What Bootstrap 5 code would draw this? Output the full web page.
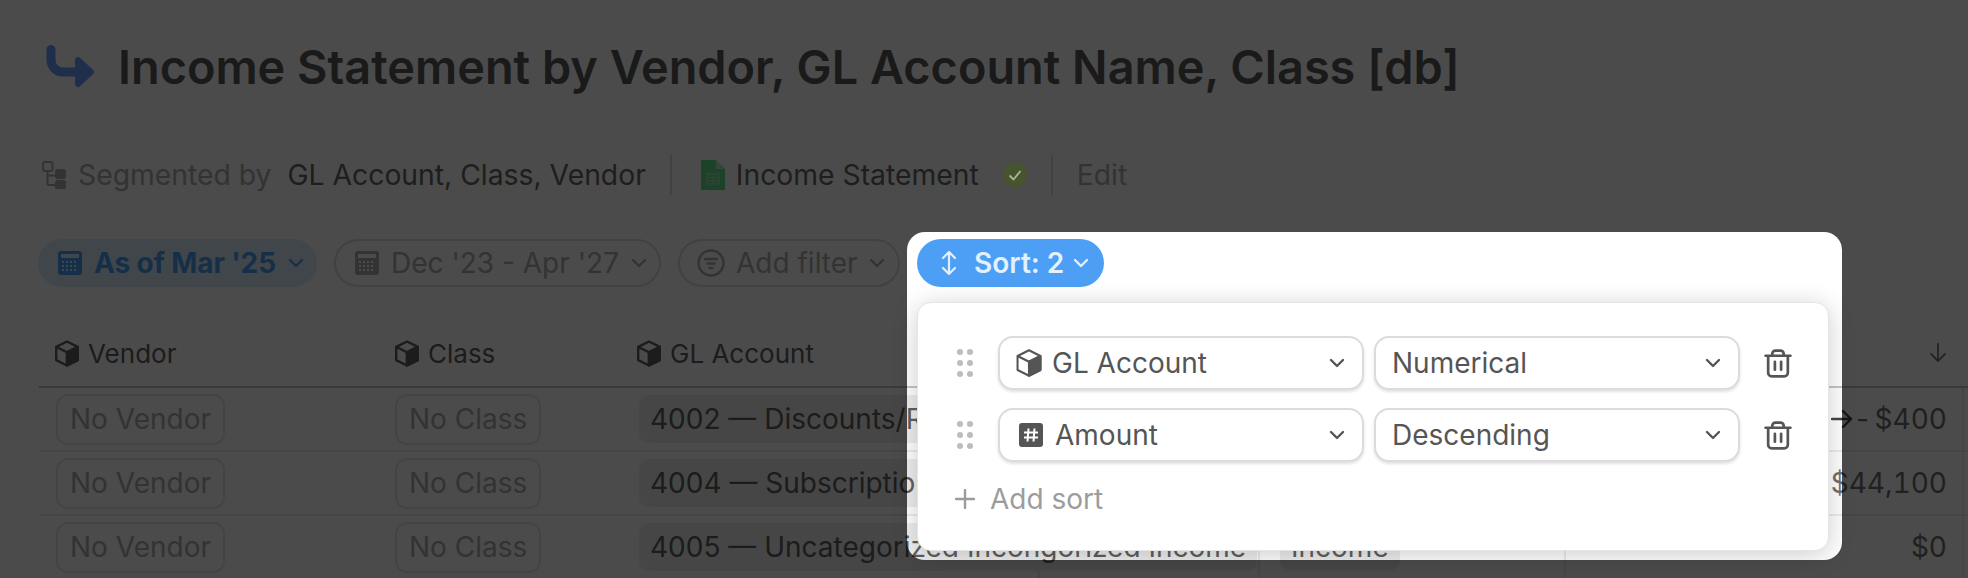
<!DOCTYPE html>
<html lang="en">
<head>
    <meta charset="UTF-8">
    <title>Income Statement by Vendor, GL Account Name, Class [db]</title>
    <link href="https://cdn.jsdelivr.net/npm/bootstrap@5.3.0/dist/css/bootstrap.min.css" rel="stylesheet">
    <style>
    html, body { height: 578px; overflow: hidden; }
    body { font-family: Inter, "Liberation Sans", sans-serif; background: #fff; color: #5a5a5a; font-size: 28px; position: relative; }
    svg { flex: none; display: block; }

    .title-row { padding: 40px 0 0 46px; height: 150px; gap: 24px; }
    .title-row h1 { font-size: 46.850px; font-weight: 600; line-height: 55px; margin: 0; color: #585858; white-space: nowrap; }
    .title-row svg { margin-top: 5px; }

    .meta-row { height: 50px; padding-left: 42px; font-size: 28.300px; white-space: nowrap; }
    .meta-muted { color: #adadad; }
    .meta-dark { color: #666; }
    .meta-sep { width: 2px; height: 40px; background: #dedede; }
    .seg-ic { margin-right: 12px; }
    .seg-val { margin-left: 16px; }
    .sheet-ic { margin-left: 29px; margin-right: 11px; }
    .ok-ic { position: relative; z-index: 11; }

    .pill-row { padding: 39px 0 0 38px; gap: 17px; }
    .fpill { height: 48px; border-radius: 24px; border: 2px solid #dcdcdc; color: #adadad; white-space: nowrap; flex: none; }
    .fpill-on { width: 279px; padding-left: 20px; gap: 12px; background: #dbeefd; border: 0; color: #4c9ff5; font-weight: 700; letter-spacing: -.1px; }
    .fpill-date { width: 327px; padding-left: 19px; gap: 12px; }
    .fpill-add { width: 222px; padding-left: 17px; gap: 11px; }
    .fpill-sort { width: 187px; padding-left: 24px; gap: 9px; background: #4c9ff5; border: 0; color: #e3f0fe; font-weight: 600; }
    .fpill-sort .ud { margin-right: 8px; }

    .data-tbl { table-layout: fixed; width: 1929px; margin: 33px 0 0 39px; --bs-table-bg: transparent; --bs-table-color: #6f6f6f; }
    .data-tbl th, .data-tbl td { padding: 0 0 0 17px; vertical-align: middle; white-space: nowrap; border-bottom: 2px solid #ebebeb; }
    .data-tbl th { height: 67px; padding-left: 16px; font-size: 26px; font-weight: 400; border-bottom-color: #c5c5c5; color: #5f5f5f; }
    .data-tbl th:nth-child(2) { padding-left: 17px; }
    .data-tbl th:nth-child(3) { padding-left: 18px; }
    .data-tbl td { height: 64px; }
    .data-tbl td.line-r { border-right: 2px solid #ebebeb; }
    .data-tbl .cw1 { width: 339px; }
    .data-tbl .cw2 { width: 241px; }
    .data-tbl .cw3 { width: 420px; }
    .data-tbl .cw4 { width: 220px; }
    .data-tbl .cw5 { width: 306px; }
    .data-tbl .cw6 { width: 403px; }
    .data-tbl th.amt, .data-tbl td.amt { padding: 0 21px 0 0; text-align: right; font-variant-numeric: tabular-nums; font-feature-settings: "tnum"; }
    .data-tbl td.amt { box-shadow: inset -4px 0 0 #fff, inset -6px 0 0 #ebebeb; }
    .neg-sign { margin-right: 3px; }
    .chip-none { height: 51px; line-height: 47px; padding: 0 12px; border: 2px solid #e6e6e6; border-radius: 12px; color: #adadad; }
    .chip-fill { height: 48px; line-height: 48px; padding: 0 11px; margin-left: 3px; border-radius: 10px; background: #eeeeee; color: #5f5f5f; }
    .hd-cell { gap: 9px; }

    .spot { left: 907px; top: 232px; width: 935px; height: 328px; border-radius: 18px; box-shadow: 0 0 0 2200px rgba(0, 0, 0, .705); z-index: 10; }
    .sort-panel { margin: 70px 0 0 10px; width: 912px; height: 249px; border: 1px solid #e6e6e6; border-radius: 14px; box-shadow: 0 4px 26px rgba(0, 0, 0, .2); padding: 33px 0 0 39px; color: #555; }
    .sort-line { gap: 10px; margin-bottom: 18px; height: 54px; }
    .sort-line .drag { margin-right: 15px; }
    .sort-line .bin { margin-left: 14px; }
    .pick { width: 366px; height: 54px; border: 2px solid #dcdcdc; border-radius: 15px; box-shadow: 0 2px 3px rgba(0, 0, 0, .12); padding: 0 17px 0 16px; gap: 10px; background: #fff; }
    .pick .chev { margin-left: auto; }
    .hash-ic { margin: 0 2px 0 3px; }
    .add-sort { color: #9c9c9c; gap: 15px; margin: -2px 0 0 -2px; }
    </style>
</head>
<body>
    <div class="d-flex title-row">
        <svg width="48" height="44" viewBox="0 0 48 44" fill="none">
            <path d="M5 4.500V15a12 12 0 0 0 12 12h16" stroke="#699fff" stroke-width="9" stroke-linecap="round"/>
            <path d="M32 15 45 27 32 39Z" fill="#699fff" stroke="#699fff" stroke-width="6" stroke-linejoin="round"/>
        </svg>
        <h1>Income Statement by Vendor, GL Account Name, Class [db]</h1>
    </div>

    <div class="d-flex align-items-center meta-row">
        <svg class="seg-ic" width="24" height="28" viewBox="0 0 24 28" fill="none">
            <rect x="1" y="1" width="9.500" height="9" rx="2" stroke="#adadad" stroke-width="2"/>
            <path d="M5.500 10v13a1 1 0 0 0 1 1H13M5.500 13.500a1 1 0 0 0 1 1H13" stroke="#adadad" stroke-width="2"/>
            <rect x="13" y="8" width="11" height="10" rx="2.500" fill="#adadad"/>
            <rect x="13" y="19" width="11" height="9.500" rx="2.500" fill="#adadad"/>
        </svg>
        <span class="meta-muted">Segmented by</span>
        <span class="meta-dark seg-val">GL Account, Class, Vendor</span>
        <span class="meta-sep ms-4"></span>
        <svg class="sheet-ic" width="24" height="30" viewBox="0 0 24 30">
            <path d="M0 0H15L24 9V30H0Z" fill="#62e08c"/>
            <path d="M15 0 24 9H15Z" fill="#b4f2c8"/>
            <path d="M6 14H18V24H6ZM6 17.300H18M6 20.600H18M12 14V24" fill="none" stroke="#a0e8b8" stroke-width="1.300"/>
        </svg>
        <span class="meta-dark">Income Statement</span>
        <svg class="ok-ic ms-4" width="24" height="24" viewBox="0 0 24 24">
            <circle cx="12" cy="12" r="12" fill="#46552e"/>
            <path d="M6.500 12.500 10.500 16.500 17.500 8" fill="none" stroke="#a9b39a" stroke-width="1.800"/>
        </svg>
        <span class="meta-sep ms-4"></span>
        <span class="meta-muted ms-4">Edit</span>
    </div>

    <div class="d-flex pill-row">
        <div class="d-flex align-items-center fpill fpill-on">
            <svg width="24" height="24" viewBox="0 0 24 24">
                <path d="M3 0H21a3 3 0 0 1 3 3V21a3 3 0 0 1-3 3H3a3 3 0 0 1-3-3V3a3 3 0 0 1 3-3Z" fill="#4c9ff5"/>
                <rect x="3" y="3" width="18" height="4" fill="#dbeefd"/>
                <path d="M4 11H20M4 15H20M4 19H20" stroke="#dbeefd" stroke-width="2" stroke-dasharray="2 2"/>
            </svg>
            <span>As of Mar '25</span>
            <svg width="16" height="10" viewBox="0 0 16 10" fill="none"><path d="M2 2 8 8 14 2" stroke="#4c9ff5" stroke-width="2.400" stroke-linecap="round" stroke-linejoin="round"/></svg>
        </div>
        <div class="d-flex align-items-center fpill fpill-date">
            <svg width="24" height="24" viewBox="0 0 24 24">
                <path d="M3 0H21a3 3 0 0 1 3 3V21a3 3 0 0 1-3 3H3a3 3 0 0 1-3-3V3a3 3 0 0 1 3-3Z" fill="#adadad"/>
                <rect x="3" y="3" width="18" height="4" fill="#fff"/>
                <path d="M4 11H20M4 15H20M4 19H20" stroke="#fff" stroke-width="2" stroke-dasharray="2 2"/>
            </svg>
            <span>Dec '23 - Apr '27</span>
            <svg width="16" height="10" viewBox="0 0 16 10" fill="none"><path d="M2 2 8 8 14 2" stroke="#adadad" stroke-width="2.400" stroke-linecap="round" stroke-linejoin="round"/></svg>
        </div>
        <div class="d-flex align-items-center fpill fpill-add">
            <svg width="28" height="28" viewBox="0 0 28 28" fill="none" stroke="#adadad" stroke-width="2.400" stroke-linecap="round">
                <circle cx="14" cy="14" r="12.500"/>
                <path d="M8 10H20M10.500 14.500H17.500M12.500 19H15.500"/>
            </svg>
            <span>Add filter</span>
            <svg width="16" height="10" viewBox="0 0 16 10" fill="none"><path d="M2 2 8 8 14 2" stroke="#adadad" stroke-width="2.400" stroke-linecap="round" stroke-linejoin="round"/></svg>
        </div>
        <div class="d-flex align-items-center fpill fpill-sort">
            <svg class="ud" width="16" height="26" viewBox="0 0 16 26" fill="none" stroke="#e3f0fe" stroke-width="2.200" stroke-linecap="round" stroke-linejoin="round">
                <path d="M8 2V24M2 8 8 2 14 8M2 18 8 24 14 18"/>
            </svg>
            <span>Sort: 2</span>
            <svg width="16" height="10" viewBox="0 0 16 10" fill="none"><path d="M2 2 8 8 14 2" stroke="#e3f0fe" stroke-width="2.400" stroke-linecap="round" stroke-linejoin="round"/></svg>
        </div>
    </div>

    <table class="table data-tbl">
        <colgroup>
            <col class="cw1"><col class="cw2"><col class="cw3"><col class="cw4"><col class="cw5"><col class="cw6">
        </colgroup>
        <thead>
            <tr>
                <th><div class="d-flex align-items-center hd-cell"><svg width="24" height="27" viewBox="2 1 20 22" fill="none" stroke="#5f5f5f" stroke-width="2" stroke-linejoin="round"><path d="M12 2 21 6.500V17.500L12 22 3 17.500V6.500Z"/><path d="M3 6.500 12 11 21 6.500M12 11V22"/><path d="M12 11 21 6.500V17.500L12 22Z" fill="#5f5f5f"/></svg>Vendor</div></th>
                <th><div class="d-flex align-items-center hd-cell"><svg width="24" height="27" viewBox="2 1 20 22" fill="none" stroke="#5f5f5f" stroke-width="2" stroke-linejoin="round"><path d="M12 2 21 6.500V17.500L12 22 3 17.500V6.500Z"/><path d="M3 6.500 12 11 21 6.500M12 11V22"/><path d="M12 11 21 6.500V17.500L12 22Z" fill="#5f5f5f"/></svg>Class</div></th>
                <th><div class="d-flex align-items-center hd-cell"><svg width="24" height="27" viewBox="2 1 20 22" fill="none" stroke="#5f5f5f" stroke-width="2" stroke-linejoin="round"><path d="M12 2 21 6.500V17.500L12 22 3 17.500V6.500Z"/><path d="M3 6.500 12 11 21 6.500M12 11V22"/><path d="M12 11 21 6.500V17.500L12 22Z" fill="#5f5f5f"/></svg>GL Account</div></th>
                <th></th>
                <th></th>
                <th class="amt"><div class="d-flex justify-content-end"><svg width="18" height="20" viewBox="0 0 18 20" fill="none" stroke="#777" stroke-width="1.800" stroke-linecap="round" stroke-linejoin="round"><path d="M9 1V18M2 11 9 18 16 11"/></svg></div></th>
            </tr>
        </thead>
        <tbody>
            <tr>
                <td><span class="d-inline-block chip-none">No Vendor</span></td>
                <td><span class="d-inline-block chip-none">No Class</span></td>
                <td class="line-r"><span class="d-inline-block chip-fill">4002 — Discounts/Refunds</span></td>
                <td class="line-r"></td>
                <td class="line-r"><span class="d-inline-block chip-fill">Income</span></td>
                <td class="amt"><div class="d-flex align-items-center justify-content-end"><svg width="22" height="20" viewBox="0 0 22 20" fill="none" stroke="#444" stroke-width="2.400" stroke-linecap="round" stroke-linejoin="round"><path d="M1 10H20M12 2 20 10 12 18"/></svg><span class="neg-sign">-</span>$400</div></td>
            </tr>
            <tr>
                <td><span class="d-inline-block chip-none">No Vendor</span></td>
                <td><span class="d-inline-block chip-none">No Class</span></td>
                <td class="line-r"><span class="d-inline-block chip-fill">4004 — Subscription Income</span></td>
                <td class="line-r"></td>
                <td class="line-r"><span class="d-inline-block chip-fill">Income</span></td>
                <td class="amt">$44,100</td>
            </tr>
            <tr>
                <td><span class="d-inline-block chip-none">No Vendor</span></td>
                <td><span class="d-inline-block chip-none">No Class</span></td>
                <td class="line-r"><span class="d-inline-block chip-fill">4005 — Uncategorized Incongorized Income</span></td>
                <td class="line-r"></td>
                <td class="line-r"><span class="d-inline-block chip-fill">Income</span></td>
                <td class="amt">$0</td>
            </tr>
        </tbody>
    </table>

    <div class="position-absolute spot">
        <div class="card sort-panel">
            <div class="d-flex align-items-center sort-line">
                <svg class="drag" width="16" height="28" viewBox="0 0 16 28" fill="#bdbdbd"><circle cx="3" cy="3" r="3"/><circle cx="13" cy="3" r="3"/><circle cx="3" cy="14" r="3"/><circle cx="13" cy="14" r="3"/><circle cx="3" cy="25" r="3"/><circle cx="13" cy="25" r="3"/></svg>
                <div class="d-flex align-items-center pick">
                    <svg width="26" height="28" viewBox="2 1 20 22" fill="none" stroke="#555" stroke-width="1.600" stroke-linejoin="round"><path d="M12 2 21 6.500V17.500L12 22 3 17.500V6.500Z"/><path d="M3 6.500 12 11 21 6.500M12 11V22"/><path d="M12 11 21 6.500V17.500L12 22Z" fill="#555"/></svg>
                    <span>GL Account</span>
                    <svg class="chev" width="16" height="10" viewBox="0 0 16 10" fill="none"><path d="M2 2 8 8 14 2" stroke="#555" stroke-width="2.400" stroke-linecap="round" stroke-linejoin="round"/></svg>
                </div>
                <div class="d-flex align-items-center pick">
                    <span>Numerical</span>
                    <svg class="chev" width="16" height="10" viewBox="0 0 16 10" fill="none"><path d="M2 2 8 8 14 2" stroke="#555" stroke-width="2.400" stroke-linecap="round" stroke-linejoin="round"/></svg>
                </div>
                <svg class="bin" width="28" height="29" viewBox="0 0 27 28" fill="none" stroke="#555" stroke-width="2.600" stroke-linecap="round" stroke-linejoin="round"><path d="M8 6V4.500a3 3 0 0 1 3-3h5a3 3 0 0 1 3 3V6M1.500 6.500H25.500M4 6.500V23a3.500 3.500 0 0 0 3.500 3.500h12A3.500 3.500 0 0 0 23 23V6.500M10.500 12.500V20M16.500 12.500V20"/></svg>
            </div>
            <div class="d-flex align-items-center sort-line">
                <svg class="drag" width="16" height="28" viewBox="0 0 16 28" fill="#bdbdbd"><circle cx="3" cy="3" r="3"/><circle cx="13" cy="3" r="3"/><circle cx="3" cy="14" r="3"/><circle cx="13" cy="14" r="3"/><circle cx="3" cy="25" r="3"/><circle cx="13" cy="25" r="3"/></svg>
                <div class="d-flex align-items-center pick">
                    <svg class="hash-ic" width="24" height="24" viewBox="0 0 24 24"><rect width="24" height="24" rx="3" fill="#555"/><path d="M9.500 5.500 8.500 18.500M15.500 5.500 14.500 18.500M5 9.500H19M5 14.500H19" stroke="#fff" stroke-width="2" fill="none"/></svg>
                    <span>Amount</span>
                    <svg class="chev" width="16" height="10" viewBox="0 0 16 10" fill="none"><path d="M2 2 8 8 14 2" stroke="#555" stroke-width="2.400" stroke-linecap="round" stroke-linejoin="round"/></svg>
                </div>
                <div class="d-flex align-items-center pick">
                    <span>Descending</span>
                    <svg class="chev" width="16" height="10" viewBox="0 0 16 10" fill="none"><path d="M2 2 8 8 14 2" stroke="#555" stroke-width="2.400" stroke-linecap="round" stroke-linejoin="round"/></svg>
                </div>
                <svg class="bin" width="28" height="29" viewBox="0 0 27 28" fill="none" stroke="#555" stroke-width="2.600" stroke-linecap="round" stroke-linejoin="round"><path d="M8 6V4.500a3 3 0 0 1 3-3h5a3 3 0 0 1 3 3V6M1.500 6.500H25.500M4 6.500V23a3.500 3.500 0 0 0 3.500 3.500h12A3.500 3.500 0 0 0 23 23V6.500M10.500 12.500V20M16.500 12.500V20"/></svg>
            </div>
            <div class="d-flex align-items-center add-sort">
                <svg width="20" height="20" viewBox="0 0 20 20" stroke="#9c9c9c" stroke-width="2.400" stroke-linecap="round"><path d="M10 1V19M1 10H19"/></svg>
                <span>Add sort</span>
            </div>
        </div>
    </div>

    <script src="https://cdn.jsdelivr.net/npm/bootstrap@5.3.0/dist/js/bootstrap.bundle.min.js"></script>
</body>
</html>
